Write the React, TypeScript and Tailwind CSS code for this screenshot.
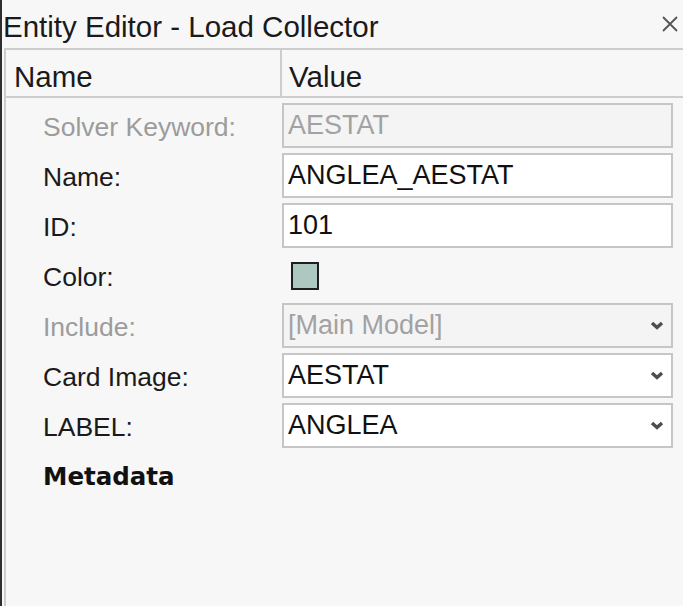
import React from 'react';

type Row =
  | { kind: 'text'; label: string; value: string; disabled?: boolean }
  | { kind: 'select'; label: string; value: string; disabled?: boolean }
  | { kind: 'color'; label: string; color: string };

const rows: Row[] = [
  { kind: 'text', label: 'Solver Keyword:', value: 'AESTAT', disabled: true },
  { kind: 'text', label: 'Name:', value: 'ANGLEA_AESTAT' },
  { kind: 'text', label: 'ID:', value: '101' },
  { kind: 'color', label: 'Color:', color: '#adc8c0' },
  { kind: 'select', label: 'Include:', value: '[Main Model]', disabled: true },
  { kind: 'select', label: 'Card Image:', value: 'AESTAT' },
  { kind: 'select', label: 'LABEL:', value: 'ANGLEA' },
];

const Chevron = () => (
  <svg width="14" height="9" viewBox="0 0 14 9" className="shrink-0">
    <polyline points="2,2 7,6.5 12,2" fill="none" stroke="#4d4d4d" strokeWidth="3.4" />
  </svg>
);

const App: React.FC = () => {
  return (
    <div className="flex h-[606px] w-[683px] flex-col overflow-hidden border-l-2 border-[#2e2e2e] bg-[#f7f7f7] font-['Liberation_Sans',Arial,sans-serif] text-[#1a1a1a]">
      {/* Title bar */}
      <div className="flex h-[48px] shrink-0 items-center justify-between pl-[1px] pr-[4px]">
        <span className="pt-[6px] text-[29.5px] leading-none">Entity Editor - Load Collector</span>
        <svg width="18" height="18" viewBox="0 0 18 18" className="mb-[1px]">
          <path d="M2 2 L16 16 M16 2 L2 16" stroke="#555" strokeWidth="1.8" />
        </svg>
      </div>

      {/* Table */}
      <div className="ml-[2px] flex flex-1 flex-col border-l-2 border-t-2 border-[#cdcdcd]">
        <div className="grid h-[48px] shrink-0 grid-cols-[276px_1fr] border-b-2 border-[#cdcdcd] text-[29.5px] leading-none">
          <div className="flex items-center border-r-2 border-[#cdcdcd] pl-[8px] pt-[8px]">Name</div>
          <div className="flex items-center pl-[7px] pt-[8px]">Value</div>
        </div>

        <div className="flex flex-col gap-[5px] pt-[5px] pr-[10px]">
          {rows.map((row) => {
            const disabled = 'disabled' in row && row.disabled;
            return (
              <div key={row.label} className="grid h-[45px] grid-cols-[276px_1fr] items-center">
                <span
                  className={`pl-[37px] pt-[4px] text-[26.5px] leading-none ${disabled ? 'text-[#9c9c9c]' : 'text-[#1a1a1a]'}`}
                >
                  {row.label}
                </span>
                {row.kind === 'color' ? (
                  <div className="pl-[9px]">
                    <div className="h-[28px] w-[28px] border-2 border-[#1e1e1e]" style={{ backgroundColor: row.color }} />
                  </div>
                ) : (
                  <div
                    className={`flex h-[45px] items-center justify-between border-2 border-[#c6c6c6] pl-[4px] pr-[7px] text-[27px] leading-none ${
                      disabled ? 'bg-[#f4f4f4] text-[#a2a2a2]' : 'bg-white text-[#111]'
                    }`}
                  >
                    <span>{row.value}</span>
                    {row.kind === 'select' && <Chevron />}
                  </div>
                )}
              </div>
            );
          })}
          <div className="flex h-[45px] items-center pl-[37px] pt-[4px]">
            <span className="font-['DejaVu_Sans',sans-serif] text-[24.5px] font-bold leading-none text-[#111]">Metadata</span>
          </div>
        </div>
      </div>
    </div>
  );
};

export default App;
